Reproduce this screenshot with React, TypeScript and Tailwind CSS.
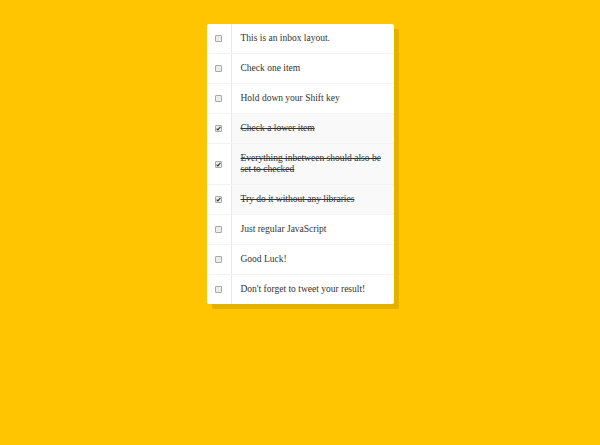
import React from "react";

const items: { text: string; checked: boolean }[] = [
  { text: "This is an inbox layout.", checked: false },
  { text: "Check one item", checked: false },
  { text: "Hold down your Shift key", checked: false },
  { text: "Check a lower item", checked: true },
  { text: "Everything inbetween should also be set to checked", checked: true },
  { text: "Try do it without any libraries", checked: true },
  { text: "Just regular JavaScript", checked: false },
  { text: "Good Luck!", checked: false },
  { text: "Don't forget to tweet your result!", checked: false },
];

function Box({ checked }: { checked: boolean }) {
  return (
    <div className="ml-[8px] mr-[9px] w-[7px] h-[7px] shrink-0 border border-[#a9a9a9] bg-[#ececec] rounded-[1px] flex items-center justify-center">
      {checked && (
        <svg width="5" height="5" viewBox="0 0 5 5">
          <path d="M0.6 2.6 L1.9 3.9 L4.4 0.9" stroke="#333" strokeWidth="1.1" fill="none" />
        </svg>
      )}
    </div>
  );
}

export default function App() {
  return (
    <div className="min-h-[445px] w-full bg-[#ffc600] pt-[24px]" style={{ fontFamily: '"Liberation Serif", serif' }}>
      <div className="mx-auto w-[187px] bg-white rounded-[2px] shadow-[5px_5px_0_rgba(0,0,0,0.1)]">
        {items.map((it, i) => (
          <div
            key={i}
            className={`flex items-center ${i < items.length - 1 ? "border-b border-[#f3f3f3]" : ""}`}
          >
            <Box checked={it.checked} />
            <p
              className={`m-0 flex-1 px-[9px] py-[9px] text-[9.5px] leading-[11px] text-[#333] border-l border-[#dfe9ff] ${
                it.checked ? "bg-[#f9f9f9] line-through" : ""
              }`}
            >
              {it.text}
            </p>
          </div>
        ))}
      </div>
    </div>
  );
}
